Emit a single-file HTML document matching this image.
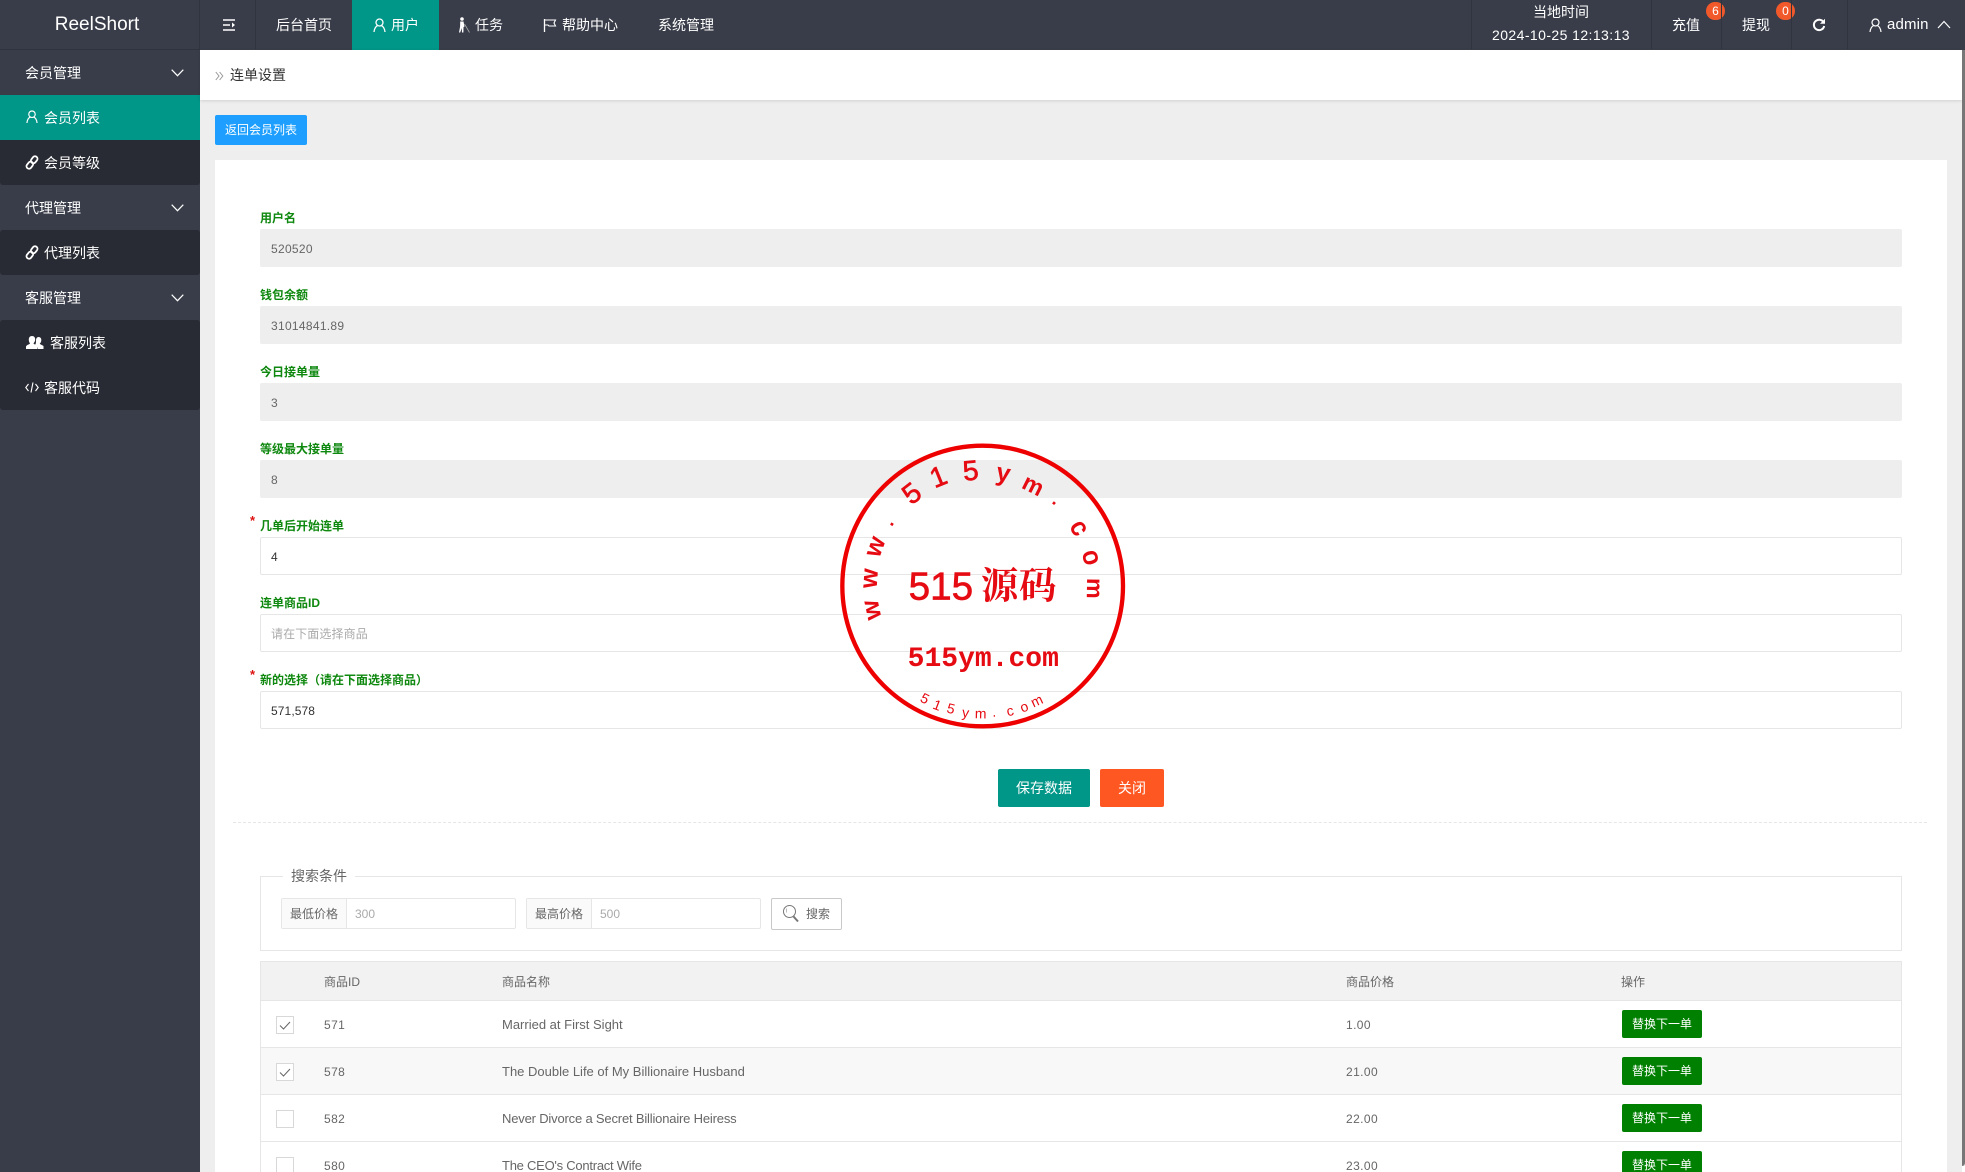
<!DOCTYPE html>
<html lang="zh-CN">
<head>
<meta charset="utf-8">
<title>ReelShort</title>
<style>
*{box-sizing:border-box;margin:0;padding:0}
html,body{width:1965px;height:1172px;overflow:hidden;background:#eee}
body{position:relative;font-family:"Liberation Sans","Noto Sans CJK SC",sans-serif;font-size:14px;color:#666}
.a{position:absolute;white-space:nowrap}
#top{left:0;top:0;width:1965px;height:50px;background:#393d49}
.t{position:absolute;color:#fff;font-size:14px;line-height:20px;top:15px;white-space:nowrap}
.div{position:absolute;top:0;width:1px;height:49px;background:#30343f}
.badge{position:absolute;top:2px;width:19px;height:18px;border-radius:9px;background:#f2592a;color:#fff;font-size:12px;line-height:18px;text-align:center}
#side{left:0;top:50px;width:200px;height:1122px;background:#393d49}
.row{position:absolute;left:0;width:200px;height:45px;color:#fff;font-size:14px;line-height:47px;padding-left:25px;white-space:nowrap}
.dk{background:#282b33}
.ic{position:absolute;top:0;left:0}
.lb{position:absolute;left:260px;font-size:12px;font-weight:bold;color:#0f880f;line-height:18px;white-space:nowrap}
.in{position:absolute;left:260px;width:1642px;height:38px;line-height:38px;border:1px solid #e6e6e6;border-radius:2px;padding-left:10px;font-size:12px;background:#fff;color:#333;letter-spacing:.1px}
.ro{background:#eee;border-color:#eee;color:#666;letter-spacing:.3px}
.star{position:absolute;left:250px;color:#d11;font-size:13px;font-weight:bold;line-height:14px}
.td{position:absolute;font-size:12px;line-height:18px;color:#666;white-space:nowrap}
.nm{font-size:13px}
.hl{position:absolute;left:260px;width:1642px;height:1px;background:#e6e6e6}
.cb{position:absolute;left:276px;width:18px;height:18px;border:1px solid #d8d8d8;background:#fff}
.rep{position:absolute;left:1622px;width:80px;height:28px;background:#008000;border-radius:2px;color:#fff;font-size:12px;line-height:28px;text-align:center}
</style>
</head>
<body>

<div class="a" id="top">
  <div class="a" style="left:0;top:0;width:200px;height:50px;line-height:50px;text-align:center;color:#fff;font-size:19px;padding-right:6px">ReelShort</div>
  <div class="a" style="left:0;top:49px;width:200px;height:1px;background:#2f333d"></div>
  <div class="div" style="left:199px"></div>
  <svg class="a" style="left:222px;top:18px" width="14" height="14" viewBox="0 0 14 14"><path d="M1 2h12M1 7h7M1 12h12" stroke="#fff" stroke-width="1.6" fill="none"/><path d="M10 4.5 13 7l-3 2.5z" fill="#fff"/></svg>
  <div class="div" style="left:255px"></div>
  <div class="t" style="left:276px">后台首页</div>
  <div class="a" style="left:352px;top:0;width:87px;height:50px;background:#009688"></div>
  <svg class="a" style="left:373px;top:18px" width="13" height="15" viewBox="0 0 13 15"><circle cx="6.5" cy="4.5" r="3.5" fill="none" stroke="#fff" stroke-width="1.3"/><path d="M1 14c.3-3.5 2-6 3.6-6.3M12 14c-.3-3.5-2-6-3.6-6.3" fill="none" stroke="#fff" stroke-width="1.3"/></svg>
  <div class="t" style="left:391px">用户</div>
  <svg class="a" style="left:457px;top:17px" width="13" height="16" viewBox="0 0 13 16"><circle cx="5" cy="2" r="1.8" fill="#fff"/><path d="M3.2 4.5h3.3l1 5-1 .6-.1 5.4H5L4.8 11l-1.6 4.5H2l1.1-6z" fill="#fff"/><path d="M7.5 7l5 8.5" stroke="#aaa" stroke-width=".8"/></svg>
  <div class="t" style="left:475px">任务</div>
  <svg class="a" style="left:543px;top:18px" width="14" height="15" viewBox="0 0 14 15"><path d="M1.5 1v13" stroke="#fff" stroke-width="1.3"/><path d="M1.5 2h11l-1.5 3 1.5 3H6l-1-1H1.5" fill="none" stroke="#fff" stroke-width="1.1"/></svg>
  <div class="t" style="left:562px">帮助中心</div>
  <div class="t" style="left:658px">系统管理</div>

  <div class="div" style="left:1471px"></div>
  <div class="t" style="left:1533px;top:2px">当地时间</div>
  <div class="t" style="left:1492px;top:25px;letter-spacing:.42px">2024-10-25 12:13:13</div>
  <div class="div" style="left:1651px"></div>
  <div class="t" style="left:1672px">充值</div>
  <div class="badge" style="left:1706px">6</div>
  <div class="div" style="left:1721px"></div>
  <div class="t" style="left:1742px">提现</div>
  <div class="badge" style="left:1776px">0</div>
  <div class="div" style="left:1791px"></div>
  <svg class="a" style="left:1812px;top:18px" width="14" height="14" viewBox="0 0 14 14"><path d="M11.6 4.3A5.2 5.2 0 1 0 12.2 8" fill="none" stroke="#fff" stroke-width="2"/><path d="M13 .8v5H8z" fill="#fff"/></svg>
  <div class="div" style="left:1847px"></div>
  <svg class="a" style="left:1869px;top:18px" width="13" height="15" viewBox="0 0 13 15"><circle cx="6.5" cy="4.5" r="3.5" fill="none" stroke="#fff" stroke-width="1.2"/><path d="M1 14c.3-3.5 2-6 3.6-6.3M12 14c-.3-3.5-2-6-3.6-6.3" fill="none" stroke="#fff" stroke-width="1.2"/></svg>
  <div class="t" style="left:1887px;font-size:15px;letter-spacing:.15px">admin</div>
  <svg class="a" style="left:1937px;top:20px" width="14" height="9" viewBox="0 0 14 9"><path d="M1 8l6-6.5L13 8" fill="none" stroke="#fff" stroke-width="1.2"/></svg>
</div>

<div class="a" id="side">
  <div class="row" style="top:0">会员管理<svg class="a" style="left:171px;top:19px" width="13" height="8" viewBox="0 0 13 8"><path d="M.7.7l5.8 6 5.8-6" fill="none" stroke="#fff" stroke-width="1.2"/></svg></div>
  <div class="row" style="top:45px;background:#009688;padding-left:44px">会员列表<svg class="ic" style="left:26px;top:15px" width="12" height="14" viewBox="0 0 13 15"><circle cx="6.5" cy="4.5" r="3.5" fill="none" stroke="#fff" stroke-width="1.3"/><path d="M1 14c.3-3.5 2-6 3.6-6.3M12 14c-.3-3.5-2-6-3.6-6.3" fill="none" stroke="#fff" stroke-width="1.3"/></svg></div>
  <div class="row dk" style="top:90px;padding-left:44px;border-radius:0 0 3px 3px">会员等级<svg class="ic" style="left:25px;top:15px" width="14" height="15" viewBox="0 0 14 15"><g fill="none" stroke="#fff" stroke-width="1.8"><rect x="6.7" y="1" width="5" height="7.6" rx="2.500" transform="rotate(38 9.200 4.800)"/><rect x="2.300" y="6.400" width="5" height="7.6" rx="2.500" transform="rotate(38 4.800 10.200)"/></g></svg></div>
  <div class="row" style="top:135px">代理管理<svg class="a" style="left:171px;top:19px" width="13" height="8" viewBox="0 0 13 8"><path d="M.7.7l5.8 6 5.8-6" fill="none" stroke="#fff" stroke-width="1.2"/></svg></div>
  <div class="row dk" style="top:180px;padding-left:44px;border-radius:3px">代理列表<svg class="ic" style="left:25px;top:15px" width="14" height="15" viewBox="0 0 14 15"><g fill="none" stroke="#fff" stroke-width="1.8"><rect x="6.7" y="1" width="5" height="7.6" rx="2.500" transform="rotate(38 9.200 4.800)"/><rect x="2.300" y="6.400" width="5" height="7.6" rx="2.500" transform="rotate(38 4.800 10.200)"/></g></svg></div>
  <div class="row" style="top:225px">客服管理<svg class="a" style="left:171px;top:19px" width="13" height="8" viewBox="0 0 13 8"><path d="M.7.7l5.8 6 5.8-6" fill="none" stroke="#fff" stroke-width="1.2"/></svg></div>
  <div class="a dk" style="left:0;top:270px;width:200px;height:90px;border-radius:3px"></div>
  <div class="row" style="top:270px;padding-left:50px">客服列表<svg class="ic" style="left:26px;top:16px" width="18" height="13" viewBox="0 0 18 13"><path d="M12.5 1c2 0 3 1.500 2.800 3.500-.1 1.400-.8 2.500-1.500 3 0 1 2.200 1.300 3.700 2.500V13H12c0-2.500-1.500-3.500-3-4.200 1-1 1-2.500 1-4.300C10 2.500 11 1 12.500 1z" fill="#fff"/><path d="M6 0c2.200 0 3.300 1.700 3.200 3.800-.1 1.500-.9 2.800-1.700 3.400 0 1.200 3.500 1.500 4 3.300V13H0v-2.500c.5-1.800 4-2.100 4-3.300C3.300 6.600 2.800 5.300 2.800 3.800 2.700 1.700 3.800 0 6 0z" fill="#fff"/></svg></div>
  <div class="row" style="top:315px;padding-left:44px">客服代码<svg class="ic" style="left:25px;top:17px" width="14" height="11" viewBox="0 0 14 11"><path d="M3.500 2 .8 5.500 3.500 9M10.500 2l2.700 3.500L10.500 9M8 .5 6 10.500" fill="none" stroke="#fff" stroke-width="1.100"/></svg></div>
</div>

<!-- breadcrumb -->
<div class="a" style="left:200px;top:50px;width:1762px;height:50px;background:#fff;box-shadow:0 1px 3px rgba(0,0,0,.12)"></div>
<svg class="a" style="left:215px;top:71px" width="9" height="10" viewBox="0 0 9 10"><path d="M.8 1 4 5 .8 9M4.600 1 7.800 5 4.600 9" fill="none" stroke="#999" stroke-width="1"/></svg>
<div class="a" style="left:230px;top:65px;font-size:14px;line-height:20px;color:#333">连单设置</div>

<div class="a" style="left:215px;top:115px;width:92px;height:30px;background:#1e9fff;border-radius:2px;color:#fff;font-size:12px;line-height:31px;text-align:center">返回会员列表</div>

<!-- card -->
<div class="a" style="left:215px;top:160px;width:1732px;height:1012px;background:#fff"></div>

<div class="lb" style="top:209px">用户名</div>
<div class="in ro" style="top:229px">520520</div>
<div class="lb" style="top:286px">钱包余额</div>
<div class="in ro" style="top:306px">31014841.89</div>
<div class="lb" style="top:363px">今日接单量</div>
<div class="in ro" style="top:383px">3</div>
<div class="lb" style="top:440px">等级最大接单量</div>
<div class="in ro" style="top:460px">8</div>
<div class="star" style="top:514px">*</div>
<div class="lb" style="top:517px">几单后开始连单</div>
<div class="in" style="top:537px">4</div>
<div class="lb" style="top:594px">连单商品ID</div>
<div class="in" style="top:614px;color:#aaa">请在下面选择商品</div>
<div class="star" style="top:668px">*</div>
<div class="lb" style="top:671px">新的选择（请在下面选择商品）</div>
<div class="in" style="top:691px">571,578</div>

<div class="a" style="left:998px;top:769px;width:92px;height:38px;background:#009688;border-radius:2px;color:#fff;font-size:14px;line-height:38px;text-align:center">保存数据</div>
<div class="a" style="left:1100px;top:769px;width:64px;height:38px;background:#ff5722;border-radius:2px;color:#fff;font-size:14px;line-height:38px;text-align:center">关闭</div>

<div class="a" style="left:233px;top:822px;width:1694px;height:0;border-top:1px dashed #e6e6e6"></div>

<!-- fieldset -->
<div class="a" style="left:260px;top:876px;width:1642px;height:75px;border:1px solid #e6e6e6"></div>
<div class="a" style="left:283px;top:866px;padding:0 8px;background:#fff;font-size:14px;line-height:20px;color:#666">搜索条件</div>

<div class="a" style="left:281px;top:898px;width:235px;height:31px;border:1px solid #e6e6e6;border-radius:2px;background:#fff">
  <div class="a" style="left:0;top:0;width:65px;height:29px;background:#fafafa;border-right:1px solid #e6e6e6;font-size:12px;line-height:30px;text-align:center;color:#666">最低价格</div>
  <div class="a" style="left:73px;top:0;font-size:12px;line-height:31px;color:#aaa">300</div>
</div>
<div class="a" style="left:526px;top:898px;width:235px;height:31px;border:1px solid #e6e6e6;border-radius:2px;background:#fff">
  <div class="a" style="left:0;top:0;width:65px;height:29px;background:#fafafa;border-right:1px solid #e6e6e6;font-size:12px;line-height:30px;text-align:center;color:#666">最高价格</div>
  <div class="a" style="left:73px;top:0;font-size:12px;line-height:31px;color:#aaa">500</div>
</div>
<div class="a" style="left:771px;top:898px;width:71px;height:32px;border:1px solid #c9c9c9;border-radius:2px;background:#fff;font-size:12px;line-height:30px;color:#666;padding-left:34px">搜索</div>
<svg class="a" style="left:782px;top:904px" width="18" height="19" viewBox="0 0 18 19"><circle cx="7.5" cy="7.500" r="6" fill="none" stroke="#777" stroke-width="1"/><path d="M4.500 4.500v4" stroke="#bbb" stroke-width="1" fill="none"/><path d="M11.500 12.500l4.500 5" stroke="#777" stroke-width="2" fill="none"/></svg>

<!-- table -->
<div class="a" style="left:260px;top:961px;width:1642px;height:39px;background:#f2f2f2"></div>
<div class="a" style="left:260px;top:1047px;width:1642px;height:47px;background:#f8f8f8"></div>
<div class="a" style="left:260px;top:961px;width:1px;height:211px;background:#e6e6e6"></div>
<div class="a" style="left:1901px;top:961px;width:1px;height:211px;background:#e6e6e6"></div>
<div class="hl" style="top:961px"></div>
<div class="hl" style="top:1000px"></div>
<div class="hl" style="top:1047px"></div>
<div class="hl" style="top:1094px"></div>
<div class="hl" style="top:1141px"></div>

<div class="td" style="left:324px;top:973px">商品ID</div>
<div class="td" style="left:502px;top:973px">商品名称</div>
<div class="td" style="left:1346px;top:973px">商品价格</div>
<div class="td" style="left:1621px;top:973px">操作</div>

<div class="cb" style="top:1016px"><svg width="16" height="16" viewBox="0 0 16 16" style="display:block"><path d="M3 8.500l3.500 3.500L13 5" fill="none" stroke="#666" stroke-width="1"/></svg></div>
<div class="td" style="left:324px;top:1016px;letter-spacing:.4px">571</div>
<div class="td nm" style="left:502px;top:1016px">Married at First Sight</div>
<div class="td" style="left:1346px;top:1016px;letter-spacing:.4px">1.00</div>
<div class="rep" style="top:1010px">替换下一单</div>

<div class="cb" style="top:1063px"><svg width="16" height="16" viewBox="0 0 16 16" style="display:block"><path d="M3 8.500l3.500 3.500L13 5" fill="none" stroke="#666" stroke-width="1"/></svg></div>
<div class="td" style="left:324px;top:1063px;letter-spacing:.4px">578</div>
<div class="td nm" style="left:502px;top:1063px">The Double Life of My Billionaire Husband</div>
<div class="td" style="left:1346px;top:1063px;letter-spacing:.4px">21.00</div>
<div class="rep" style="top:1057px">替换下一单</div>

<div class="cb" style="top:1110px"></div>
<div class="td" style="left:324px;top:1110px;letter-spacing:.4px">582</div>
<div class="td nm" style="left:502px;top:1110px;letter-spacing:-.18px">Never Divorce a Secret Billionaire Heiress</div>
<div class="td" style="left:1346px;top:1110px;letter-spacing:.4px">22.00</div>
<div class="rep" style="top:1104px">替换下一单</div>

<div class="cb" style="top:1157px"></div>
<div class="td" style="left:324px;top:1157px;letter-spacing:.4px">580</div>
<div class="td nm" style="left:502px;top:1157px;letter-spacing:-.25px">The CEO's Contract Wife</div>
<div class="td" style="left:1346px;top:1157px;letter-spacing:.4px">23.00</div>
<div class="rep" style="top:1151px">替换下一单</div>

<!-- scrollbar strip -->
<div class="a" style="left:1962px;top:50px;width:3px;height:1116px;background:#777;border-radius:0 0 3px 0"></div>
<div class="a" style="left:1962px;top:1166px;width:3px;height:6px;background:#fff"></div>

<!-- stamp -->
<svg class="a" style="left:820px;top:430px;pointer-events:none" width="320" height="310" viewBox="0 0 960 930">
  <circle cx="488" cy="468" r="421" fill="none" stroke="#ee0000" stroke-width="13"/>
  <g fill="#e60b12" font-family="'Liberation Sans',sans-serif" font-size="76" font-weight="bold" text-anchor="middle" dominant-baseline="central">
    <text transform="translate(155,540) rotate(-102)">w</text>
    <text transform="translate(148,445) rotate(-86)">w</text>
    <text transform="translate(165,350) rotate(-70)">w</text>
    <text transform="translate(203,274) rotate(-56)" font-size="56">.</text>
    <text transform="translate(275,190) rotate(-37.500)" font-size="84" font-weight="normal" stroke="#e60b12" stroke-width="2">5</text>
    <text transform="translate(355,140) rotate(-22)" font-size="84" font-weight="normal" stroke="#e60b12" stroke-width="2">1</text>
    <text transform="translate(452,122) rotate(-6)" font-size="84" font-weight="normal" stroke="#e60b12" stroke-width="2">5</text>
    <text transform="translate(550,130) rotate(10.500)">y</text>
    <text transform="translate(640,165) rotate(26.600)" font-size="70">m</text>
    <text transform="translate(712,208) rotate(41)" font-size="56">.</text>
    <text transform="translate(778,293) rotate(59)" font-weight="normal" stroke="#e60b12" stroke-width="3">c</text>
    <text transform="translate(815,382) rotate(75)" font-weight="normal" stroke="#e60b12" stroke-width="3">o</text>
    <text transform="translate(825,475) rotate(91)" font-size="70">m</text>
  </g>
  <text x="266" y="508" fill="#e60b12" stroke="#e60b12" stroke-width="2" font-family="'Liberation Sans',sans-serif" font-size="116">515</text>
  <text x="483" y="506" fill="#e60b12" font-family="'Noto Serif CJK SC',serif" font-weight="bold" font-size="112" letter-spacing="2">源码</text>
  <text x="263" y="708" fill="#e60b12" font-family="'Liberation Mono',monospace" font-size="84" font-weight="bold">515ym.com</text>
  <g fill="#e60b12" font-family="'Liberation Sans',sans-serif" font-size="42" text-anchor="middle" dominant-baseline="central">
    <text transform="translate(315,805) rotate(27)">5</text>
    <text transform="translate(352,825) rotate(21)">1</text>
    <text transform="translate(393,835) rotate(14.500)">5</text>
    <text transform="translate(437,847) rotate(7.700)">y</text>
    <text transform="translate(482,850) rotate(1)">m</text>
    <text transform="translate(522,845) rotate(-5)">.</text>
    <text transform="translate(570,842) rotate(-12)">c</text>
    <text transform="translate(612,830) rotate(-19)">o</text>
    <text transform="translate(650,812) rotate(-25)">m</text>
  </g>
</svg>

</body>
</html>
